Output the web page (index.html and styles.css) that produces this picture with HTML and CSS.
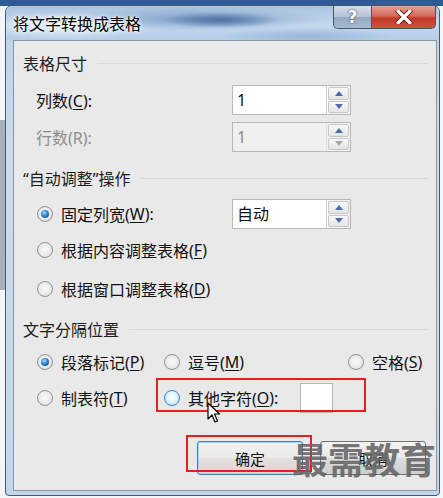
FILE: index.html
```html
<!DOCTYPE html>
<html lang="zh-CN">
<head>
    <meta charset="UTF-8">
    <title>将文字转换成表格</title>
    <link rel="stylesheet" href="styles.css">
</head>
<body>

    <div class="dialog">
        <!-- Title bar -->
        <div class="titlebar">
            <span class="title">将文字转换成表格</span>
            <div class="caption-btns">
                <span class="cap-btn help">?</span>
                <span class="cap-btn close">
                    <svg width="18" height="14" viewBox="0 0 18 14">
                        <path d="M3 1 L15 13 M15 1 L3 13" stroke="#5a1a12" stroke-width="5" stroke-linecap="round"/>
                        <path d="M3 1 L15 13 M15 1 L3 13" stroke="#fff" stroke-width="3.2" stroke-linecap="round"/>
                    </svg>
                </span>
            </div>
        </div>

        <div class="client">
            <!-- Table size -->
            <div class="group-head">表格尺寸</div>
            <div class="row first">
                <span class="label">列数(<u>C</u>):</span>
                <div class="spin">
                    <span class="spin-field">1</span>
                    <div class="spin-btns">
                        <span class="spin-btn"><i class="tri up"></i></span>
                        <span class="spin-btn"><i class="tri down"></i></span>
                    </div>
                </div>
            </div>
            <div class="row gap7">
                <span class="label disabled">行数(R):</span>
                <div class="spin off">
                    <span class="spin-field">1</span>
                    <div class="spin-btns">
                        <span class="spin-btn"><i class="tri up"></i></span>
                        <span class="spin-btn"><i class="tri down grey"></i></span>
                    </div>
                </div>
            </div>

            <!-- AutoFit -->
            <div class="group-head mt14">“自动调整”操作</div>
            <div class="row gap9">
                <span class="opt wide"><i class="radio on"></i>固定列宽(<u>W</u>):</span>
                <div class="spin">
                    <span class="spin-field">自动</span>
                    <div class="spin-btns">
                        <span class="spin-btn"><i class="tri up"></i></span>
                        <span class="spin-btn"><i class="tri down"></i></span>
                    </div>
                </div>
            </div>
            <div class="row gap6">
                <span class="opt"><i class="radio"></i>根据内容调整表格(<u>F</u>)</span>
            </div>
            <div class="row gap9">
                <span class="opt"><i class="radio"></i>根据窗口调整表格(<u>D</u>)</span>
            </div>

            <!-- Separator -->
            <div class="group-head mt13">文字分隔位置</div>
            <div class="row gap6 sep-row">
                <span class="opt col1"><i class="radio on"></i>段落标记(<u>P</u>)</span>
                <span class="opt col2"><i class="radio"></i>逗号(<u>M</u>)</span>
                <span class="opt col3"><i class="radio"></i>空格(<u>S</u>)</span>
            </div>
            <div class="row gap6 sep-row">
                <span class="opt col1"><i class="radio"></i>制表符(<u>T</u>)</span>
                <span class="opt col2"><i class="radio hover"></i>其他字符(<u>O</u>):</span>
                <span class="char-field"></span>
                <span class="mark mark-other"></span>
            </div>

            <!-- Buttons -->
            <div class="buttons">
                <span class="btn default">确定</span>
                <span class="btn">取消</span>
                <span class="mark mark-ok"></span>
                <span class="watermark">最需教育</span>
            </div>

            <svg class="cursor" width="14" height="22" viewBox="0 0 14 22">
                <path d="M1 1 L1 17 L5 13 L8 20 L10.5 19 L7.5 12 L12.5 12 Z" fill="#fff" stroke="#000" stroke-width="1.2" stroke-linejoin="round"/>
            </svg>
        </div>
    </div>

</body>
</html>
```

FILE: styles.css
```css
body {
    margin: 0;
    padding: 5px 2px 0 5px;
    font-family: "Noto Sans", "Noto Sans CJK SC", sans-serif;
    background:
        linear-gradient(#2e5a98, #2e5a98) 0 0 / 100% 6px no-repeat,
        linear-gradient(#a7b1bb, #a7b1bb) 0 120px / 5px 170px no-repeat,
        #f4f5f6;
    height: 493px;
    overflow: hidden;
}

.dialog {
    width: 424px;
    height: 485px;
    padding: 0 2px 4px 7px;
    border: 1px solid #4c5866;
    border-radius: 7px 7px 4px 4px;
    background: linear-gradient(180deg, #bcd2ea 0%, #c9dcef 30%, #c3d7ec 100%);
    display: flex;
    flex-direction: column;
}

/* Title bar */
.titlebar {
    height: 34px;
    display: flex;
    justify-content: space-between;
    align-items: flex-start;
    margin-left: -7px;
    margin-right: -2px;
    padding-left: 7px;
    border-radius: 6px 6px 0 0;
    background:
        radial-gradient(ellipse 60px 8px at 215px 14px, #4f71a2, transparent),
        radial-gradient(ellipse 130px 12px at 190px 13px, #7fa0c9, transparent),
        radial-gradient(ellipse 90px 8px at 300px 30px, #98b6d9, transparent),
        radial-gradient(ellipse 80px 14px at 60px 20px, #e6eff8, transparent),
        linear-gradient(180deg, #a9c3e0 0%, #c5d9ee 55%, #b5cde8 100%);
}

.title {
    font-size: 16px;
    line-height: 34px;
    color: #000;
    text-shadow: 0 0 6px #fff, 0 0 3px #fff;
    padding-top: 1px;
}

.caption-btns {
    display: flex;
    margin-right: 3px;
}

.cap-btn {
    height: 22px;
    display: flex;
    align-items: center;
    justify-content: center;
    border: 1px solid #4a5563;
    border-top: none;
}

.help {
    width: 37px;
    border-radius: 0 0 0 5px;
    background: linear-gradient(180deg, #d3dde9 0%, #b4c4d7 48%, #93a7bf 52%, #a9bbd0 100%);
    color: #fff;
    font-family: "DejaVu Sans", sans-serif;
    font-weight: bold;
    font-size: 17px;
    text-shadow: 0 0 2px #3b4a5e, 0 0 1px #3b4a5e;
}

.close {
    width: 63px;
    border-left: none;
    border-radius: 0 0 5px 0;
    background: linear-gradient(180deg, #e3a192 0%, #d4685a 45%, #c23a28 55%, #d0523a 100%);
}

/* Client area */
.client {
    flex: 1;
    position: relative;
    border: 1px solid #8896a5;
    background: #e9e9e9;
    padding: 10px 0 0 9px;
    display: flex;
    flex-direction: column;
}

.group-head {
    height: 24px;
    display: flex;
    align-items: center;
    font-size: 16px;
    color: #1e1e1e;
    margin-right: 8px;
}

.group-head::after {
    content: "";
    flex: 1;
    height: 1px;
    margin-left: 10px;
    background: #d6d6d6;
}

.mt14 { margin-top: 14px; }
.mt13 { margin-top: 13px; }

.row {
    height: 30px;
    display: flex;
    align-items: center;
    padding-left: 13px;
    font-size: 16px;
    color: #111;
    position: relative;
}

.row.first { margin-top: 10px; }
.gap6 { margin-top: 6px; }
.gap7 { margin-top: 7px; }
.gap9 { margin-top: 9px; }

.label {
    width: 196px;
}

.label.disabled {
    color: #8c8c8c;
}

u {
    text-decoration-thickness: 1px;
    text-underline-offset: 2px;
}

/* Spin boxes */
.spin {
    width: 117px;
    height: 28px;
    display: flex;
    border: 1px solid #b8b8b8;
    background: #fff;
}

.spin-field {
    flex: 1;
    padding-left: 4px;
    line-height: 28px;
    border-right: 1px solid #cfcfcf;
    margin-right: 1px;
}

.spin.off {
    background: #efefef;
}

.spin.off .spin-field {
    color: #8a8a8a;
    background: #f0f0f0;
    border-right-color: #e0e0e0;
}

.spin-btns {
    width: 21px;
    display: flex;
    flex-direction: column;
    gap: 1px;
    padding: 1px 1px 1px 0;
    background: #f2f2f2;
}

.spin-btn {
    flex: 1;
    display: flex;
    align-items: center;
    justify-content: center;
    border: 1px solid #c8c8c8;
    border-radius: 2px;
    background: linear-gradient(180deg, #f9f9f9, #e4e4e4);
}

.tri {
    width: 0;
    height: 0;
    border-left: 4px solid transparent;
    border-right: 4px solid transparent;
}

.tri.up { border-bottom: 5px solid #4b6ea6; }
.tri.down { border-top: 5px solid #4b6ea6; }
.tri.down.grey { border-top-color: #a8a8a8; }

/* Radio options */
.opt {
    display: flex;
    align-items: center;
    white-space: nowrap;
}

.opt.wide {
    width: 196px;
}

.radio {
    width: 14px;
    height: 14px;
    margin-left: 1px;
    margin-right: 8px;
    border-radius: 50%;
    border: 1px solid #8f9194;
    background: radial-gradient(circle at 50% 45%, #fafafa 0%, #e8e8e8 60%, #cfcfcf 100%);
    display: flex;
    align-items: center;
    justify-content: center;
}

.radio.on::after {
    content: "";
    width: 8px;
    height: 8px;
    border-radius: 50%;
    background: radial-gradient(circle at 40% 35%, #a9dcff 0%, #2d85d6 45%, #0b3f7e 100%);
}

.radio.hover {
    border-color: #3d86c0;
    background: radial-gradient(circle at 50% 45%, #ffffff 0%, #d9effc 55%, #a9d6f3 100%);
}

.sep-row .col1 { width: 127px; }
.sep-row .col2 { width: 184px; }

.char-field {
    width: 31px;
    height: 28px;
    margin-left: -47px;
    border: 1px solid #b8b8b8;
    background: #fff;
}

/* Red highlight marks */
.mark {
    position: absolute;
    border: 2px solid #e5201c;
}

.mark-other {
    left: 133px;
    top: -5px;
    width: 206px;
    height: 30px;
}

.mark-ok {
    left: 163px;
    top: -6px;
    width: 122px;
    height: 33px;
}

/* Buttons */
.buttons {
    margin-top: 28px;
    height: 34px;
    display: flex;
    gap: 17px;
    padding-left: 174px;
    position: relative;
}

.btn {
    width: 104px;
    height: 32px;
    display: flex;
    align-items: center;
    justify-content: center;
    font-size: 15px;
    color: #111;
    border: 1px solid #707070;
    border-radius: 3px;
    background: linear-gradient(180deg, #f3f3f3 0%, #ebebeb 48%, #dddddd 52%, #cfcfcf 100%);
}

.btn.default {
    border-color: #3c7fb1;
    box-shadow: inset 0 0 0 1px #a6d8f5;
    background: linear-gradient(180deg, #f0f0f0 0%, #ebebeb 48%, #e2e0dc 52%, #e0d4d2 100%);
}

.watermark {
    position: absolute;
    left: 269px;
    top: -6px;
    white-space: nowrap;
    font-family: "Noto Sans CJK SC", sans-serif;
    font-size: 36px;
    font-weight: bold;
    line-height: 46px;
    color: rgba(100, 100, 100, 0.88);
}

.cursor {
    position: absolute;
    left: 193px;
    top: 361px;
}
```
